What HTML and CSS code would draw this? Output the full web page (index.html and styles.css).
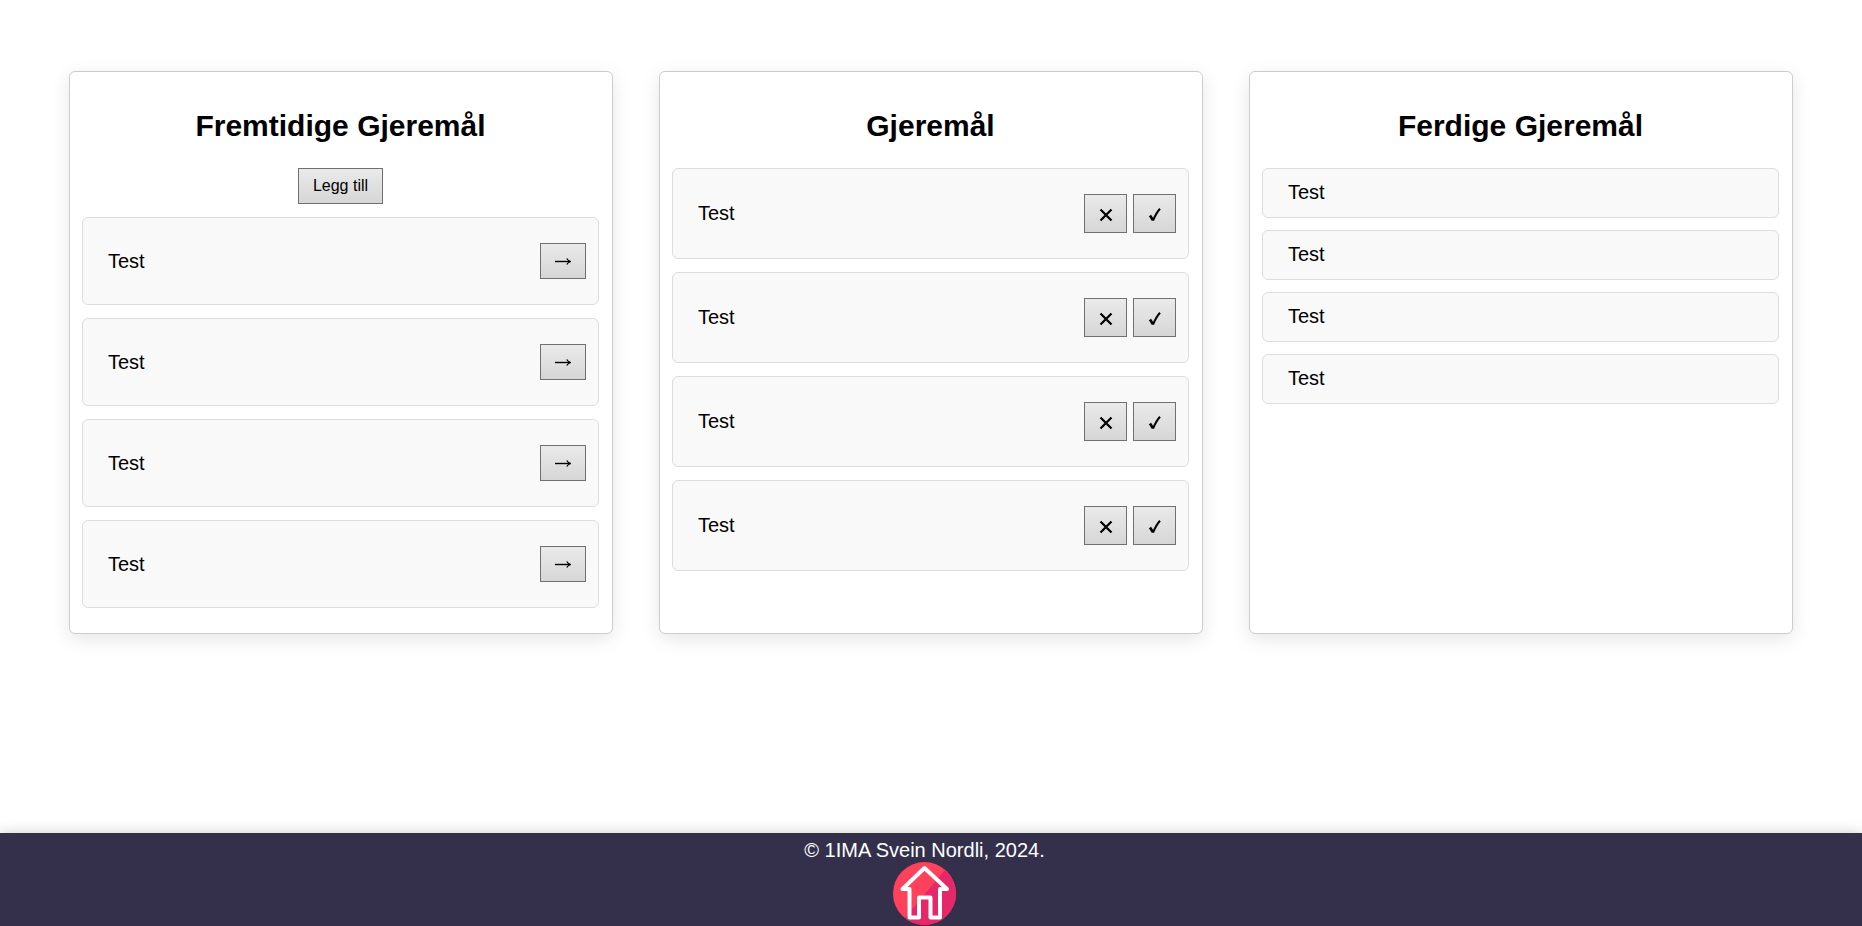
FILE: index.html
```html
<!DOCTYPE html>
<html lang="no">
<head>
  <meta charset="UTF-8">
  <meta name="viewport" content="width=device-width, initial-scale=1.0">
  <title>Gjeremål</title>
  <link rel="stylesheet" href="styles.css">
</head>
<body>
  <!-- button icons -->
  <svg class="sprite" aria-hidden="true">
    <symbol id="arrow" viewBox="0 0 18 12"><path d="M1 6.5 H16" stroke-width="1.4"/><path d="M12.8 3.5 C13.5 5 14.8 6 16.8 6.5 C14.8 7 13.5 8 12.8 9.5" stroke-width="1.2"/></symbol>
    <symbol id="cross" viewBox="0 0 14 14"><path d="M1.5 1.5 L12.5 12.5 M12.5 1.5 L1.5 12.5" stroke-width="2.2"/></symbol>
    <symbol id="check" viewBox="0 0 14 14"><path d="M2 7.5 L5 12.2" stroke-width="2.6"/><path d="M5 12.5 C7 8 9 4 12 0.8" stroke-width="2"/></symbol>
  </svg>

  <main class="container">
    <section class="column">
      <h2>Fremtidige Gjeremål</h2>
      <button class="add-btn" type="button">Legg till</button>
      <ul class="list">
        <li class="item"><span>Test</span><button class="move-btn" type="button" aria-label="Flytt"><svg width="18" height="12"><use href="#arrow"/></svg></button></li>
        <li class="item"><span>Test</span><button class="move-btn" type="button" aria-label="Flytt"><svg width="18" height="12"><use href="#arrow"/></svg></button></li>
        <li class="item"><span>Test</span><button class="move-btn" type="button" aria-label="Flytt"><svg width="18" height="12"><use href="#arrow"/></svg></button></li>
        <li class="item"><span>Test</span><button class="move-btn" type="button" aria-label="Flytt"><svg width="18" height="12"><use href="#arrow"/></svg></button></li>
      </ul>
    </section>

    <section class="column">
      <h2>Gjeremål</h2>
      <ul class="list">
        <li class="item">
          <span>Test</span>
          <div class="actions">
            <button class="icon-btn" type="button" aria-label="Slett"><svg width="14" height="14"><use href="#cross"/></svg></button>
            <button class="icon-btn" type="button" aria-label="Ferdig"><svg width="14" height="14"><use href="#check"/></svg></button>
          </div>
        </li>
        <li class="item">
          <span>Test</span>
          <div class="actions">
            <button class="icon-btn" type="button" aria-label="Slett"><svg width="14" height="14"><use href="#cross"/></svg></button>
            <button class="icon-btn" type="button" aria-label="Ferdig"><svg width="14" height="14"><use href="#check"/></svg></button>
          </div>
        </li>
        <li class="item">
          <span>Test</span>
          <div class="actions">
            <button class="icon-btn" type="button" aria-label="Slett"><svg width="14" height="14"><use href="#cross"/></svg></button>
            <button class="icon-btn" type="button" aria-label="Ferdig"><svg width="14" height="14"><use href="#check"/></svg></button>
          </div>
        </li>
        <li class="item">
          <span>Test</span>
          <div class="actions">
            <button class="icon-btn" type="button" aria-label="Slett"><svg width="14" height="14"><use href="#cross"/></svg></button>
            <button class="icon-btn" type="button" aria-label="Ferdig"><svg width="14" height="14"><use href="#check"/></svg></button>
          </div>
        </li>
      </ul>
    </section>

    <section class="column">
      <h2>Ferdige Gjeremål</h2>
      <ul class="list">
        <li class="item done">Test</li>
        <li class="item done">Test</li>
        <li class="item done">Test</li>
        <li class="item done">Test</li>
      </ul>
    </section>
  </main>

  <footer class="footer">
    <p>© 1IMA Svein Nordli, 2024.</p>
    <a class="home-link" href="#" aria-label="Hjem">
      <svg viewBox="0 0 63 63" width="63" height="63">
        <defs>
          <clipPath id="circle"><circle cx="31.5" cy="31.5" r="31.5"/></clipPath>
        </defs>
        <g clip-path="url(#circle)">
          <rect width="63" height="63" fill="#ff415b"/>
          <path d="M63 0 L51 9 L11 57 L11 63 H63 Z" fill="#e62868"/>
        </g>
        <path d="M31.5 6 L9.5 27 H16.5 V55.5 H26 V35.5 H37.5 V55.5 H47 V27 H54 Z" fill="none" stroke="#fff" stroke-width="4" stroke-linejoin="round"/>
      </svg>
    </a>
  </footer>
</body>
</html>
```
FILE: styles.css
```css
* {
  box-sizing: border-box;
}

body {
  display: flex;
  flex-direction: column;
  min-height: 100vh;
  margin: 0;
  font-family: Arial, "Liberation Sans", sans-serif;
  font-size: 20px;
  line-height: 23px;
  color: #000;
  background: #fff;
}

.sprite {
  display: none;
}

.container {
  display: flex;
  align-items: stretch;
  gap: 46px;
  margin-bottom: auto;
  padding: 71px 69px;
}

.column {
  flex: 1;
  padding: 13px 13px 12px 12px;
  text-align: center;
  background: #fff;
  border: 1px solid #ccc;
  border-radius: 6px;
  box-shadow: 0 5px 19px rgba(0, 0, 0, 0.1);
}

h2 {
  margin: 23px 0 25px;
  font-size: 30px;
  line-height: 35px;
}

button {
  font-family: inherit;
  color: #000;
  background: linear-gradient(#eaeaea, #d6d6d6);
  border: 1px solid #707070;
  cursor: pointer;
}

button:hover {
  background: #d6d6d6;
}

button svg {
  display: block;
  margin: 0 auto;
  fill: none;
  stroke: currentColor;
}

.add-btn {
  display: block;
  height: 36px;
  margin: 0 auto 13px;
  padding: 0 14px;
  font-size: 16px;
}

.list {
  margin: 0;
  padding: 0;
  list-style: none;
}

.item {
  display: flex;
  align-items: center;
  justify-content: space-between;
  margin-bottom: 13px;
  padding: 25px 12px 25px 25px;
  text-align: left;
  background: #f9f9f9;
  border: 1px solid #ddd;
  border-radius: 6px;
}

.done {
  margin-bottom: 12px;
  padding-top: 12px;
  padding-bottom: 13px;
}

.move-btn {
  width: 46px;
  height: 36px;
  padding: 0;
}

.actions {
  display: flex;
  gap: 6px;
}

.icon-btn {
  width: 43px;
  height: 39px;
  padding: 2px 0 0;
}

.footer {
  padding: 6px 13px 1px 0;
  text-align: center;
  color: #fff;
  background: #34304c;
  box-shadow: 0 0 13px rgba(0, 0, 0, 0.2);
}

.footer p {
  margin: 0;
}

.home-link {
  display: inline-block;
  vertical-align: top;
}

.home-link svg {
  display: block;
}

@media (max-width: 900px) {
  .container {
    flex-direction: column;
    padding: 24px;
  }
}
```
